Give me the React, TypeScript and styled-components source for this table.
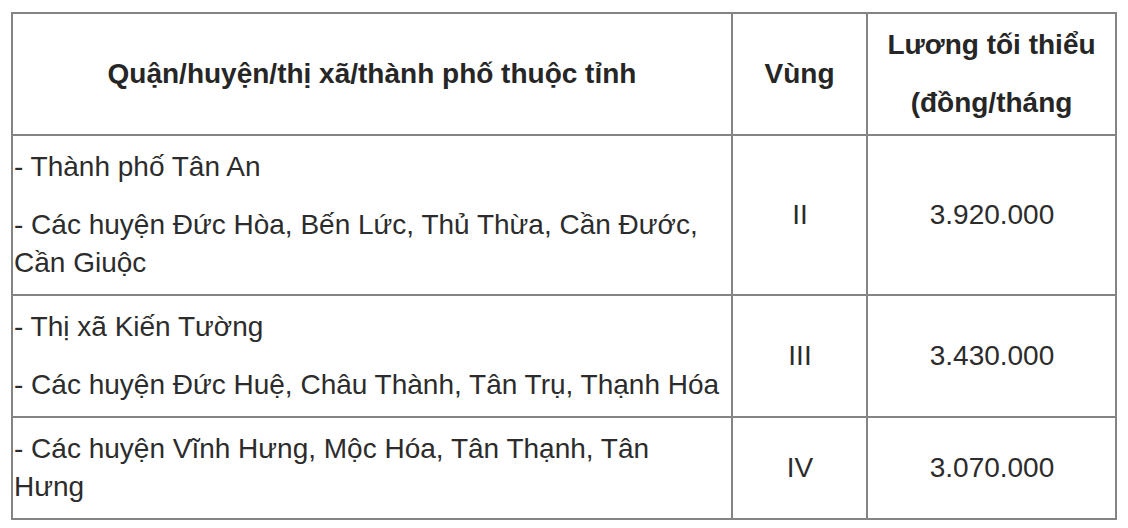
import styled, { createGlobalStyle } from "styled-components";

const GlobalStyle = createGlobalStyle`
  html, body {
    margin: 0;
    padding: 0;
    background: #ffffff;
  }
  body {
    font-family: "Liberation Sans", Arial, sans-serif;
    color: #2a2a2a;
  }
`;

type Row = {
  lines: string[];
  zone: string;
  wage: string;
};

const rows: Row[] = [
  {
    lines: [
      "- Thành phố Tân An",
      "- Các huyện Đức Hòa, Bến Lức, Thủ Thừa, Cần Đước, Cần Giuộc",
    ],
    zone: "II",
    wage: "3.920.000",
  },
  {
    lines: [
      "- Thị xã Kiến Tường",
      "- Các huyện Đức Huệ, Châu Thành, Tân Trụ, Thạnh Hóa",
    ],
    zone: "III",
    wage: "3.430.000",
  },
  {
    lines: ["- Các huyện Vĩnh Hưng, Mộc Hóa, Tân Thạnh, Tân Hưng"],
    zone: "IV",
    wage: "3.070.000",
  },
];

export default function App() {
  return (
    <>
      <GlobalStyle />
      <Page>
        <WageTable>
          <colgroup>
            <col style={{ width: 720 }} />
            <col style={{ width: 135 }} />
            <col style={{ width: 249 }} />
          </colgroup>
          <thead>
            <tr>
              <HeadCell>
                <Para>Quận/huyện/thị xã/thành phố thuộc tỉnh</Para>
              </HeadCell>
              <HeadCell>
                <Para>Vùng</Para>
              </HeadCell>
              <HeadCell>
                <Para>Lương tối thiểu</Para>
                <Para>(đồng/tháng</Para>
              </HeadCell>
            </tr>
          </thead>
          <tbody>
            {rows.map((row) => (
              <tr key={row.wage}>
                <Cell $align="left">
                  {row.lines.map((line) => (
                    <Para key={line}>{line}</Para>
                  ))}
                </Cell>
                <Cell $align="center">{row.zone}</Cell>
                <Cell $align="center">{row.wage}</Cell>
              </tr>
            ))}
          </tbody>
        </WageTable>
      </Page>
    </>
  );
}

const Page = styled.div`
  padding: 12px 0 0 11px;
`;

const WageTable = styled.table`
  border-collapse: collapse;
  table-layout: fixed;
  width: 1104px;
  font-size: 28px;
  line-height: 38px;
`;

const HeadCell = styled.th`
  border: 2px solid #848484;
  padding: 12px 0;
  text-align: center;
  vertical-align: middle;
  font-weight: bold;
  color: #262626;
`;

const Cell = styled.td<{ $align: "left" | "center" }>`
  border: 2px solid #848484;
  padding: 12px ${(p) => (p.$align === "left" ? "10px" : "0")} 12px 1px;
  text-align: ${(p) => p.$align};
  vertical-align: middle;
  color: #2c2c2c;
`;

const Para = styled.p`
  margin: 0;

  & + & {
    margin-top: 20px;
  }
`;
